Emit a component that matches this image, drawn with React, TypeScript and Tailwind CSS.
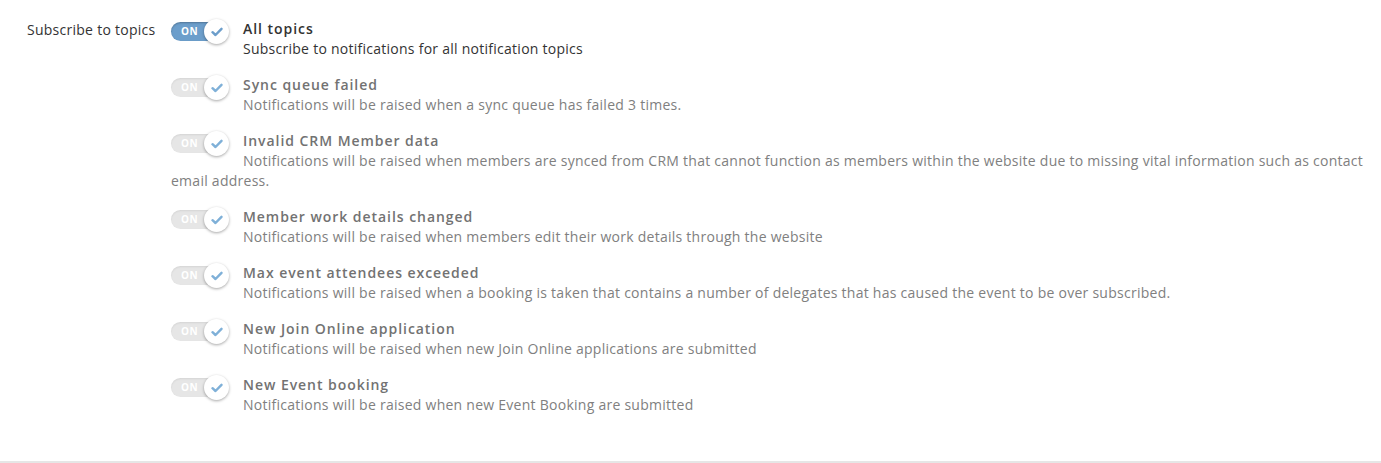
import React from 'react';

type Topic = { title: string; desc: string };

const topics: Topic[] = [
  { title: 'Sync queue failed', desc: 'Notifications will be raised when a sync queue has failed 3 times.' },
  {
    title: 'Invalid CRM Member data',
    desc: 'Notifications will be raised when members are synced from CRM that cannot function as members within the website due to missing vital information such as contact email address.',
  },
  { title: 'Member work details changed', desc: 'Notifications will be raised when members edit their work details through the website' },
  {
    title: 'Max event attendees exceeded',
    desc: 'Notifications will be raised when a booking is taken that contains a number of delegates that has caused the event to be over subscribed.',
  },
  { title: 'New Join Online application', desc: 'Notifications will be raised when new Join Online applications are submitted' },
  { title: 'New Event booking', desc: 'Notifications will be raised when new Event Booking are submitted' },
];

function Toggle({ active }: { active?: boolean }) {
  return (
    <div className="float-left mr-[15px] mt-[3px] pr-[2px]">
      <div
        className={`relative w-[55px] h-[19px] rounded-full ${
          active ? 'bg-[#6c9ecb] shadow-[inset_0_1px_2px_rgba(0,0,0,0.25)]' : 'bg-[#e6e6e6] shadow-[inset_0_1px_2px_rgba(0,0,0,0.08)]'
        }`}
      >
        <span className="absolute left-[10px] top-0 leading-[19px] text-[10px] font-bold text-white tracking-[0.5px]">ON</span>
        {/* knob */}
        <div className="absolute right-[-3px] top-[-3px] w-[25px] h-[25px] rounded-full bg-white shadow-[0_1px_3px_rgba(0,0,0,0.35)] flex items-center justify-center">
          <svg width="12" height="10" viewBox="0 0 12 10" fill="none">
            <path
              d="M1.5 5.2 L4.5 8 L10.5 1.8"
              stroke={active ? '#6c9ecb' : '#7fb0d8'}
              strokeWidth="2.4"
              strokeLinecap="round"
              strokeLinejoin="round"
            />
          </svg>
        </div>
      </div>
    </div>
  );
}

export default function App() {
  return (
    <div
      className="w-[1381px] h-[463px] bg-white border-b-2 border-[#e6e6e6] text-[14px] leading-[20px] tracking-[0.26px]"
      style={{ fontFamily: '"Open Sans", "Noto Sans", sans-serif' }}
    >
      <div className="flex pt-[19px] pr-[8px]">
        {/* Label column */}
        <div className="w-[171px] shrink-0 pl-[27px] pt-[1px] text-[#333]">Subscribe to topics</div>

        {/* Topics */}
        <div className="flex-1 flex flex-col gap-[16px]">
          <div className="flow-root">
            <Toggle active />
            <div className="font-semibold text-[#333] tracking-[0.95px]">All topics</div>
            <div className="text-[#333]">Subscribe to notifications for all notification topics</div>
          </div>

          {topics.map((t) => (
            <div key={t.title} className="flow-root">
              <Toggle />
              <div className="font-semibold text-[#727272] tracking-[0.95px]">{t.title}</div>
              <span className="text-[#808080]">{t.desc}</span>
            </div>
          ))}
        </div>
      </div>
    </div>
  );
}
